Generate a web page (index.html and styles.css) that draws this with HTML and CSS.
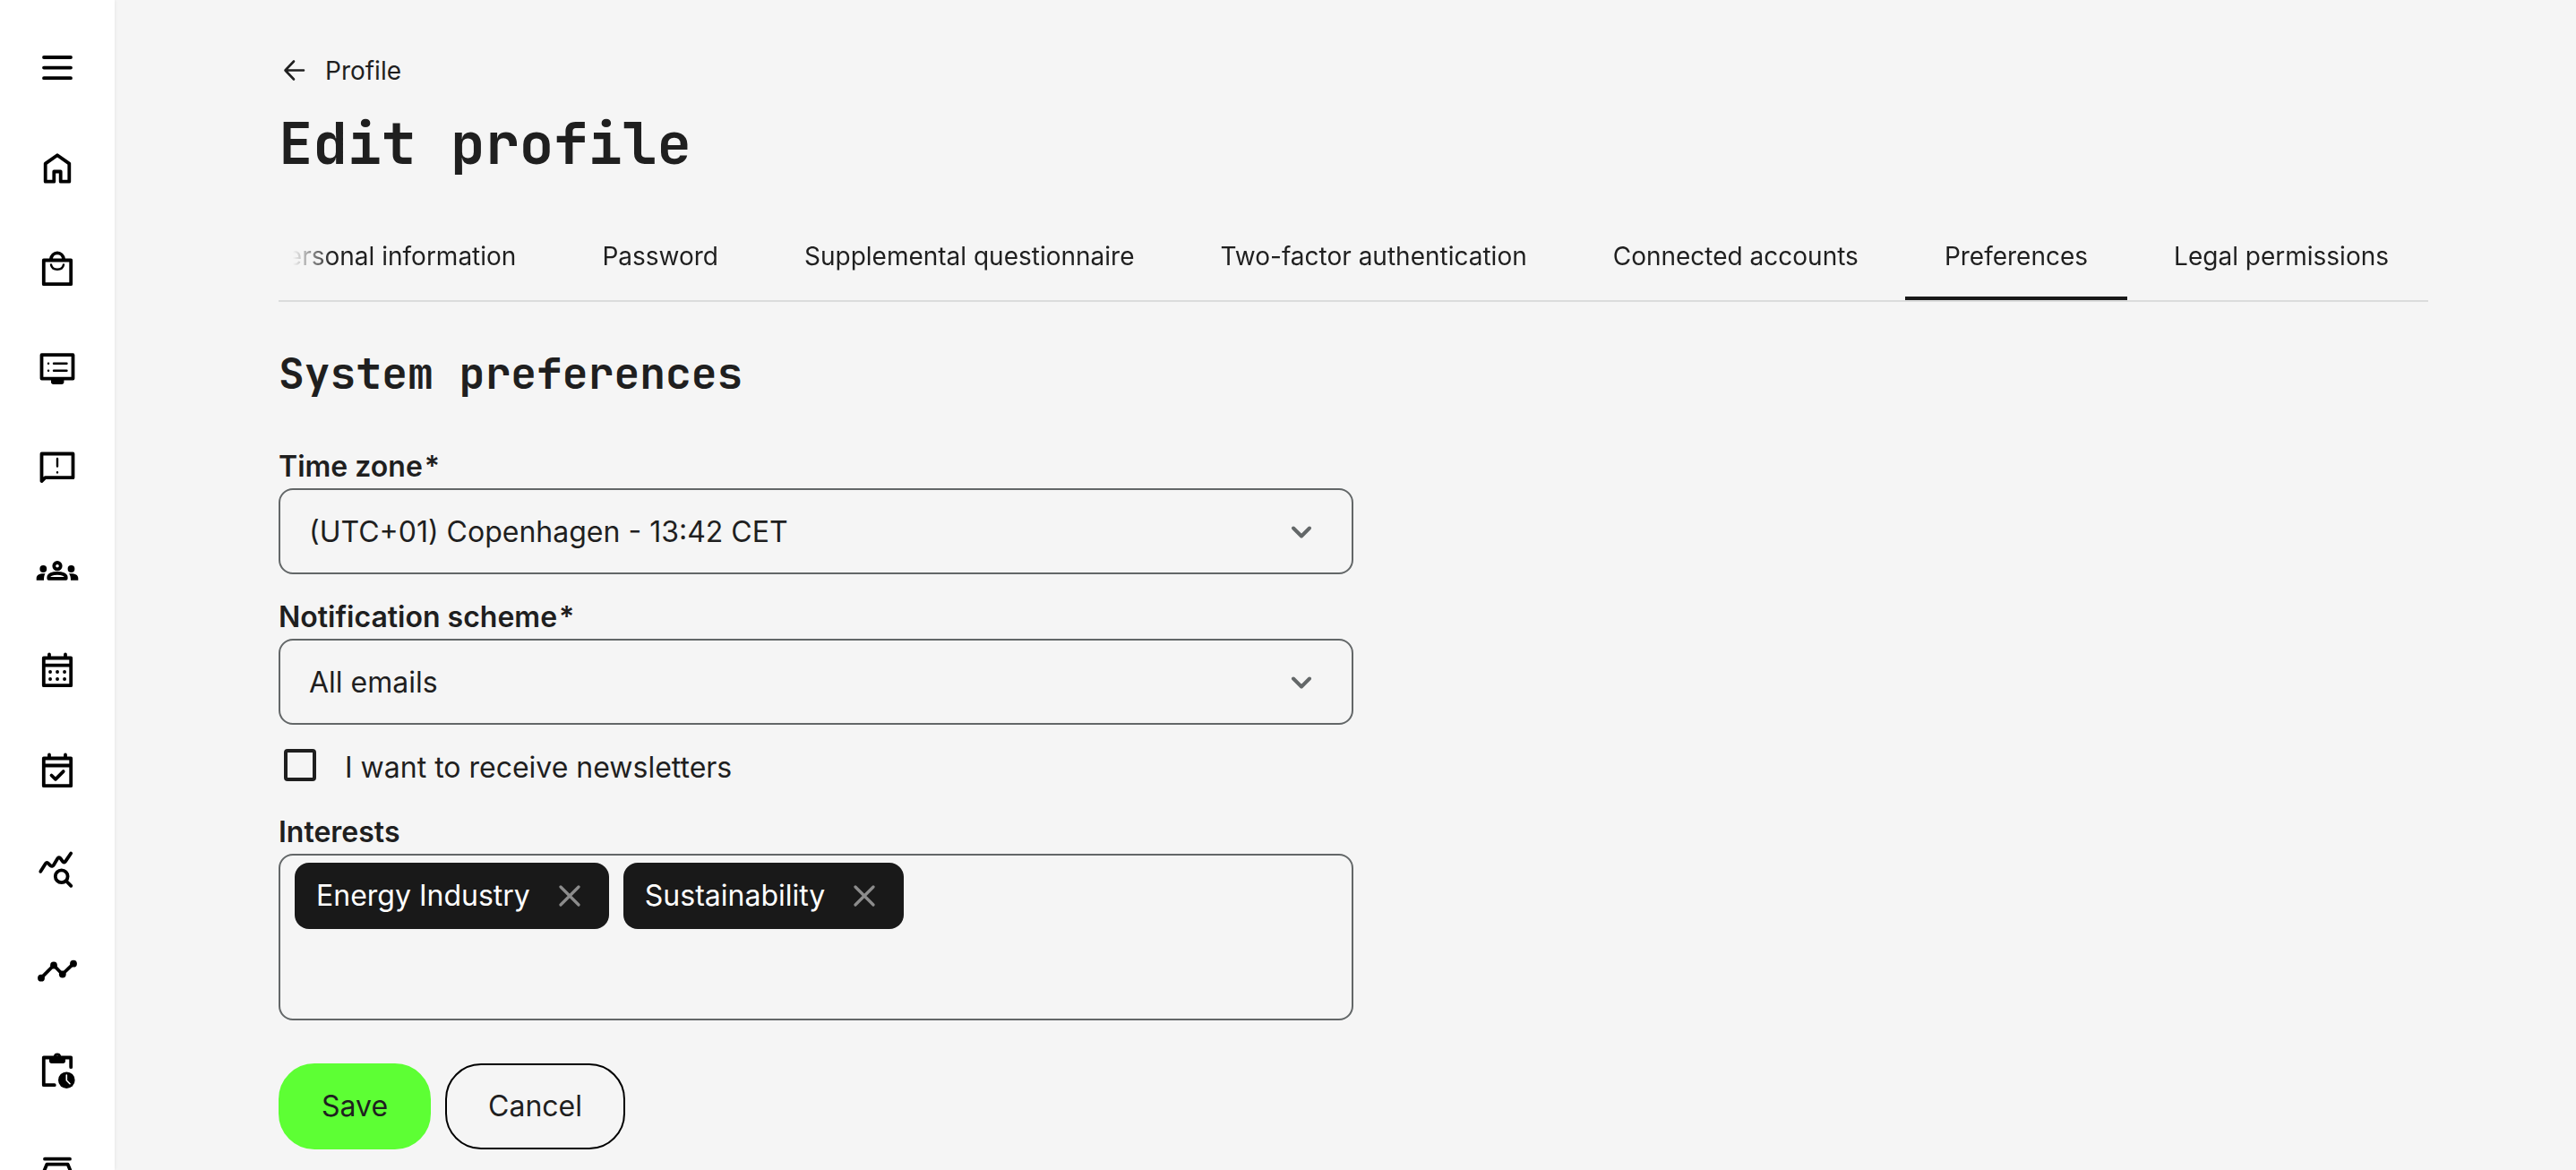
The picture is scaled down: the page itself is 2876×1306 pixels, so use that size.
FILE: index.html
```html
<!DOCTYPE html>
<html lang="en">
<head>
<meta charset="utf-8">
<meta name="viewport" content="width=device-width, initial-scale=1">
<title>Edit profile</title>
<link rel="stylesheet" href="styles.css">
</head>
<body>
<div class="app">
  <nav class="sidebar" aria-label="Main">
    <button class="nav-item" type="button" aria-label="Menu">
      <svg class="icon" viewBox="0 0 48 48"><path d="M9 12h30M9 23.6h30M9 35.2h30"/></svg>
    </button>
    <a class="nav-item" href="#" aria-label="Home">
      <svg class="icon" viewBox="0 0 48 48"><path d="M10.7 38.7V18.6L24 9.3l13.3 9.3v20.1h-9.6V27.5h-7.4v11.2z"/></svg>
    </a>
    <a class="nav-item" href="#" aria-label="Shop">
      <svg class="icon" viewBox="0 0 48 48"><path d="M8.8 14.5h30.4v26.7H8.8zM16.8 13.5a7.3 8.5 0 0 1 14.4 0"/><path class="thin" d="M17 19.5c1.3 7 12.7 7 14 0"/></svg>
    </a>
    <a class="nav-item" href="#" aria-label="Courses">
      <svg class="icon" viewBox="0 0 48 48"><path d="M6.5 8.2h35v26.4h-35z"/><path class="solid" d="M17 35h14.4v3.5c0 1.5-1 2.5-2.5 2.5h-9.4c-1.5 0-2.5-1-2.5-2.5z"/><path class="thin" d="M14 17.7h.1M14 25.7h.1M20 17.7h14.5M20 25.7h14.5"/></svg>
    </a>
    <a class="nav-item" href="#" aria-label="Feedback">
      <svg class="icon" viewBox="0 0 48 48"><path d="M6.5 37V6.5h35v26.7H10.5z"/><path class="thin" d="M24 12v8.5M24 27.3v.1"/></svg>
    </a>
    <a class="nav-item" href="#" aria-label="Groups">
      <svg class="icon" viewBox="0 0 48 48"><circle cx="24" cy="19.7" r="3.7"/><path d="M14.3 33.8v-1.3c0-3 4.5-4.7 9.7-4.7s9.7 1.7 9.7 4.7v1.3z"/><circle class="solid" cx="8.3" cy="23" r="3.9"/><circle class="solid" cx="39.5" cy="23" r="3.9"/><path class="solid" d="M.7 35.7v-2.5c0-3.4 3.6-5.4 9.8-5-1.2 2-1.5 4.2-1.5 7.5zM47.3 35.7v-2.5c0-3.4-3.6-5.4-10.3-5 1.5 2 2 4.2 2 7.5z"/></svg>
    </a>
    <a class="nav-item" href="#" aria-label="Calendar">
      <svg class="icon" viewBox="0 0 48 48"><path d="M8.8 10.5h30.4v30.7H8.8zM8.8 18.7h30.4M15 6.5v4M33 6.5v4"/><path d="M16 26h.1M24 26h.1M32 26h.1M16 34h.1M24 34h.1M32 34h.1"/></svg>
    </a>
    <a class="nav-item" href="#" aria-label="Bookings">
      <svg class="icon" viewBox="0 0 48 48"><path d="M8.8 10.5h30.4v30.7H8.8zM8.8 18.5h30.4M15 6.5v4M33 6.5v4M17.5 29.5l4.5 4.3 8.7-8.7"/></svg>
    </a>
    <a class="nav-item" href="#" aria-label="Insights">
      <svg class="icon" viewBox="0 0 48 48"><path d="M5.3 24.8l5.7-9c.8-1.2 2-1.2 3 0l2.500 2.500c1.200 1 2.500.8 3.300-.5l4.500-7.500c.9-1.400 2.300-1.400 3.200-.1l2.500 3.500c.9 1.200 2.200 1.200 3-.1l6.200-9.100"/><circle cx="28.700" cy="30.300" r="6.900"/><path d="M34 35.500l5.300 5.300"/></svg>
    </a>
    <a class="nav-item" href="#" aria-label="Progress">
      <svg class="icon" viewBox="0 0 48 48"><path d="M6 31.700l14-14.200 9.700 10L42 15.700"/><g class="solid"><circle cx="6" cy="31.700" r="3.900"/><circle cx="20" cy="17.500" r="3.900"/><circle cx="29.800" cy="27.500" r="3.900"/><circle cx="42" cy="15.700" r="3.900"/></g></svg>
    </a>
    <a class="nav-item" href="#" aria-label="Assignments">
      <svg class="icon" viewBox="0 0 48 48"><path d="M39.200 19.200V8.500H8.800v30.700h12"/><path class="solid" fill-rule="evenodd" d="M15 7h4.800a4.300 4.300 0 0 1 8.400 0H33v5.500c0 1.500-1 2.500-2.500 2.500h-13c-1.500 0-2.500-1-2.500-2.500zM24 6.500a1.300 1.300 0 1 0 .01 2.600a1.300 1.300 0 0 0-.01-2.600z"/><circle class="solid" cx="34.300" cy="33.700" r="9.300"/><path class="hands" d="M34.300 28v6l3.700 3.700"/></svg>
    </a>
    <a class="nav-item" href="#" aria-label="Library">
      <svg class="icon" viewBox="0 0 48 48"><path d="M10 9.700h28M12.300 15.700h23.400l3.300 8v16H9v-16z"/></svg>
    </a>
  </nav>

  <main class="page">
    <a class="back-link" href="#">
      <svg class="back-icon" viewBox="0 0 32 32"><path d="M26 15.500H6M15 5.500L5.500 15.500l9.500 10"/></svg>
      Profile
    </a>
    <h1 class="title">Edit profile</h1>

    <nav class="tabs" aria-label="Profile sections">
      <div class="tab-list">
        <a class="tab" href="#">Personal information</a>
        <a class="tab" href="#">Password</a>
        <a class="tab" href="#">Supplemental questionnaire</a>
        <a class="tab" href="#">Two-factor authentication</a>
        <a class="tab" href="#">Connected accounts</a>
        <a class="tab tab-active" href="#" aria-current="page">Preferences</a>
        <a class="tab" href="#">Legal permissions</a>
      </div>
    </nav>

    <h2 class="section-title">System preferences</h2>

    <form class="form">
      <div class="field">
        <label class="label" for="time-zone">Time zone<span class="required">*</span></label>
        <div class="select-wrap">
          <select class="select" id="time-zone" required>
            <option>(UTC+01) Copenhagen - 13:42 CET</option>
          </select>
          <svg class="chevron" viewBox="0 0 32 32"><path d="M7 12.500l9 9 9-9"/></svg>
        </div>
      </div>

      <div class="field">
        <label class="label" for="scheme">Notification scheme<span class="required">*</span></label>
        <div class="select-wrap">
          <select class="select" id="scheme" required>
            <option>All emails</option>
          </select>
          <svg class="chevron" viewBox="0 0 32 32"><path d="M7 12.500l9 9 9-9"/></svg>
        </div>
      </div>

      <div class="check-row">
        <input class="checkbox" type="checkbox" id="newsletters">
        <label for="newsletters">I want to receive newsletters</label>
      </div>

      <div class="field">
        <label class="label" for="interests">Interests</label>
        <div class="chip-box">
          <span class="chip">Energy Industry
            <button class="chip-remove" type="button" aria-label="Remove Energy Industry"><svg class="cross" viewBox="0 0 24 24"><path d="M2 2l20 20M22 2L2 22"/></svg></button>
          </span>
          <span class="chip">Sustainability
            <button class="chip-remove" type="button" aria-label="Remove Sustainability"><svg class="cross" viewBox="0 0 24 24"><path d="M2 2l20 20M22 2L2 22"/></svg></button>
          </span>
          <input class="chip-input" type="text" id="interests">
        </div>
      </div>

      <div class="actions">
        <button class="button button-primary" type="submit">Save</button>
        <button class="button" type="button">Cancel</button>
      </div>
    </form>
  </main>
</div>
</body>
</html>
```
FILE: styles.css
```css
:root {
  --ink: #1f1f1f;
  --outline: #636768;
  --surface: #f5f5f5;
}

* {
  box-sizing: border-box;
}

body {
  margin: 0;
  background: var(--surface);
  color: var(--ink);
  font-family: Inter, "Liberation Sans", sans-serif;
  font-size: 32px;
  line-height: 48px;
}

a {
  color: inherit;
  text-decoration: none;
}

button,
input,
select {
  font: inherit;
  color: inherit;
}

.app {
  display: flex;
  height: 100vh;
  overflow: hidden;
}

.sidebar {
  display: flex;
  flex: none;
  flex-direction: column;
  align-items: center;
  gap: 64px;
  width: 128px;
  padding-top: 52px;
  background: #fff;
  box-shadow: 0 0 4px rgba(0, 0, 0, 0.08);
  overflow: hidden;
}

.nav-item {
  display: block;
  flex: none;
  width: 48px;
  height: 48px;
  padding: 0;
  border: 0;
  background: none;
}

.icon {
  display: block;
  width: 48px;
  height: 48px;
  overflow: visible;
  fill: none;
  stroke: #000;
  stroke-width: 3.8;
  stroke-linecap: round;
  stroke-linejoin: round;
}

.icon .thin {
  stroke-width: 2.4;
}

.icon .solid {
  fill: #000;
  stroke: none;
}

.icon .hands {
  stroke: #fff;
  stroke-width: 1.6;
}

.page {
  flex: 1;
  min-width: 0;
  padding: 59px 165px 0 183px;
  overflow: auto;
}

.back-link {
  display: flex;
  align-items: center;
  gap: 18px;
  width: fit-content;
  padding-left: 2px;
  font-size: 28px;
  line-height: 40px;
}

.back-icon {
  width: 32px;
  height: 32px;
  fill: none;
  stroke: currentColor;
  stroke-width: 2.6;
  stroke-linecap: round;
  stroke-linejoin: round;
}

.title,
.section-title {
  font-family: "JetBrains Mono", "DejaVu Sans Mono", monospace;
  font-weight: 700;
}

.title {
  margin: 21px 0 26px;
  font-size: 64px;
  line-height: 80px;
}

.tabs {
  border-bottom: 2px solid #dbdcdc;
}

.tab-list {
  display: flex;
  justify-content: flex-end;
  gap: 8px;
  overflow: hidden;
  mask-image: linear-gradient(to right, transparent 16px, #000 60px);
}

.tab {
  flex: none;
  padding: 40px 44px 25px;
  border-bottom: 4px solid transparent;
  font-size: 28px;
  line-height: 40px;
}

.tab-active {
  border-bottom-color: #191919;
}

.section-title {
  margin: 48px 0;
  font-size: 48px;
  line-height: 64px;
}

.form {
  display: flex;
  flex-direction: column;
  gap: 24px;
  max-width: 1200px;
}

.label {
  display: block;
  font-weight: 600;
}

.required {
  margin-left: 2px;
}

.select-wrap {
  display: grid;
  align-items: center;
}

.select,
.chevron {
  grid-area: 1 / 1;
}

.select {
  width: 100%;
  height: 96px;
  padding: 2px 96px 0 32px;
  border: 2px solid var(--outline);
  border-radius: 16px;
  background: transparent;
  appearance: none;
}

.chevron {
  justify-self: end;
  width: 32px;
  height: 32px;
  margin-right: 42px;
  fill: none;
  stroke: var(--outline);
  stroke-width: 4;
  stroke-linecap: round;
  stroke-linejoin: round;
  pointer-events: none;
}

.check-row {
  display: flex;
  gap: 32px;
}

.checkbox {
  width: 36px;
  height: 36px;
  margin: 3px 0 0 6px;
  border: 4px solid var(--ink);
  border-radius: 4px;
  appearance: none;
}

.chip-box {
  display: flex;
  flex-wrap: wrap;
  align-items: flex-start;
  gap: 16px;
  min-height: 186px;
  padding: 8px 16px;
  border: 2px solid var(--outline);
  border-radius: 16px;
}

.chip {
  display: flex;
  align-items: center;
  gap: 32px;
  height: 74px;
  padding: 0 32px 0 24px;
  border-radius: 16px;
  background: #191919;
  color: #fff;
}

.chip-remove {
  padding: 0;
  border: 0;
  background: none;
}

.cross {
  display: block;
  width: 24px;
  height: 24px;
  fill: none;
  stroke: #8c8c8c;
  stroke-width: 3.2;
  stroke-linecap: round;
}

.chip-input {
  flex: 1;
  min-width: 120px;
  height: 74px;
  padding: 0;
  border: 0;
  outline: 0;
  background: transparent;
}

.actions {
  display: flex;
  gap: 16px;
  margin-top: 24px;
}

.button {
  height: 96px;
  padding: 0 46px;
  border: 2px solid #000;
  border-radius: 40px;
  background: transparent;
}

.button-primary {
  border-color: #5dff34;
  background: #5dff34;
}
```
